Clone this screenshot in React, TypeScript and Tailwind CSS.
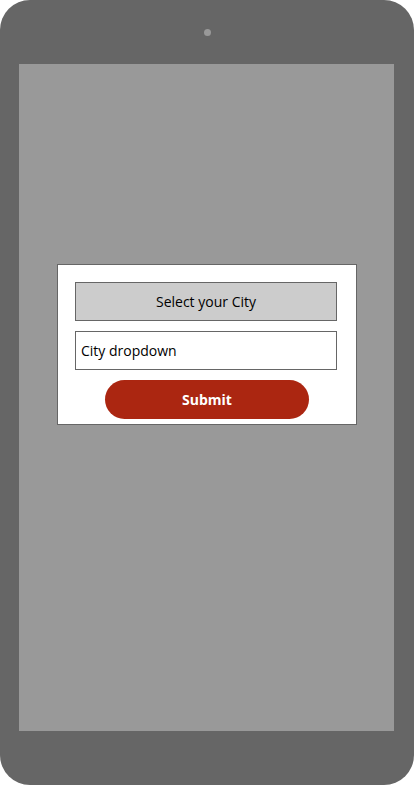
import React from "react";

export default function App() {
  return (
    <div className="w-[414px] h-[785px] bg-white" style={{ fontFamily: '"Open Sans", "Noto Sans", sans-serif' }}>
      <div className="w-[414px] h-[785px] rounded-[30px] bg-[#666666] flex flex-col items-start">
        <div className="h-[64px] flex items-center justify-center w-full">
          <div className="w-[7px] h-[7px] rounded-full bg-[#999999]" />
        </div>
        <div className="ml-[19px] w-[375px] h-[667px] bg-[#999999] flex flex-col items-start pt-[200px] pl-[38px]">
          <div className="w-[300px] h-[161px] bg-white border border-[#666666] flex flex-col items-start pt-[17px] pl-[17px]">
            <div className="w-[262px] h-[39px] bg-[#cccccc] border border-[#666666] flex items-center justify-center text-[14px] text-black">
              Select your City
            </div>
            <div className="w-[262px] h-[39px] mt-[10px] bg-white border border-[#666666] flex items-center pl-[5px] text-[14px] text-black">
              City dropdown
            </div>
            <button className="ml-[30px] w-[204px] h-[39px] mt-[10px] rounded-full bg-[#ab2611] text-white font-bold text-[14px]">
              Submit
            </button>
          </div>
        </div>
      </div>
    </div>
  );
}
